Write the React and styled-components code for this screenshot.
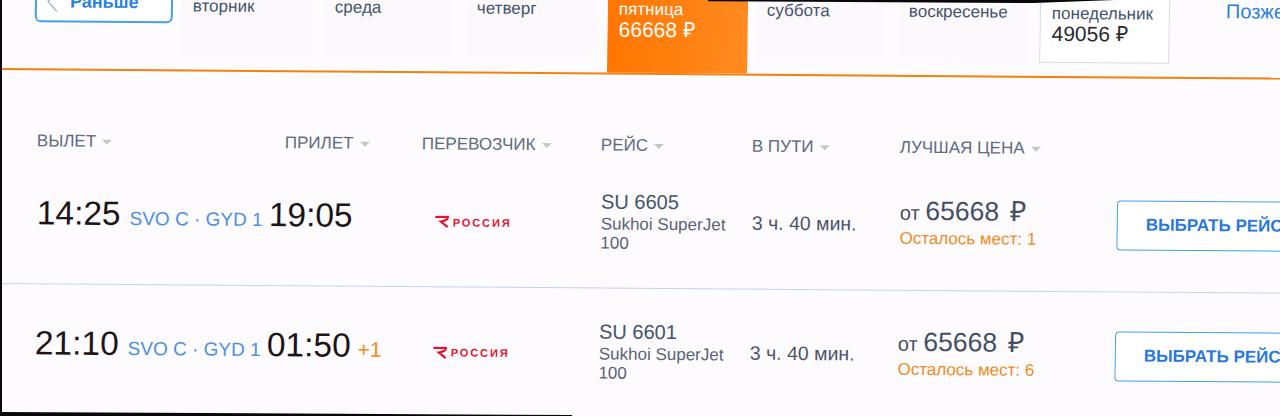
import styled, { createGlobalStyle } from "styled-components";

const days = [
  { name: "вторник" },
  { name: "среда" },
  { name: "четверг" },
  { name: "пятница", price: "66668 ₽", active: true },
  { name: "суббота" },
  { name: "воскресенье" },
  { name: "понедельник", price: "49056 ₽", lowest: true },
];

const columns = ["Вылет", "Прилет", "Перевозчик", "Рейс", "В пути", "Лучшая цена"];

const flights = [
  { dep: "14:25", arr: "19:05", number: "SU 6605", price: "65668", seats: 1 },
  { dep: "21:10", arr: "01:50", next: "+1", number: "SU 6601", price: "65668", seats: 6 },
];

const App = () => (
  <Viewport>
    <GlobalStyle />
    <Page>
      <DayStrip>
        <NavButton>
          <svg width="12" height="22" viewBox="0 0 12 22" fill="none">
            <path d="M11 1 2 11l9 10" stroke="#9fb4c8" strokeWidth="1.4" />
          </svg>
          Раньше
        </NavButton>
        {days.map((day) => (
          <DayCell key={day.name} $active={day.active} $lowest={day.lowest}>
            <DayName>{day.name}</DayName>
            {day.price && <DayPrice $lowest={day.lowest}>{day.price}</DayPrice>}
          </DayCell>
        ))}
        <LaterLink>Позже</LaterLink>
      </DayStrip>

      <HeaderRow>
        {columns.map((title) => (
          <HeaderCell key={title} $shift={title === "Прилет"}>
            {title}
          </HeaderCell>
        ))}
      </HeaderRow>

      {flights.map((flight) => (
        <FlightRow key={flight.number}>
          <TimeCell>
            <Time>{flight.dep}</Time>
            <Airports>SVO C · GYD 1</Airports>
          </TimeCell>
          <TimeCell>
            <Time>{flight.arr}</Time>
            {flight.next && <NextDay>{flight.next}</NextDay>}
          </TimeCell>
          <Carrier>
            <svg width="15" height="13" viewBox="0 0 15 13" fill="none">
              <path
                d="M0.5 1.5H13Q13.5 5 6 6.2L13 11.8"
                stroke="#e3132f"
                strokeWidth="2.2"
              />
            </svg>
            <CarrierName>россия</CarrierName>
          </Carrier>
          <FlightInfo>
            <FlightNumber>{flight.number}</FlightNumber>
            <Aircraft>Sukhoi SuperJet 100</Aircraft>
          </FlightInfo>
          <Duration>3 ч. 40 мин.</Duration>
          <PriceCell>
            <Price>
              от <strong>{flight.price}</strong>
              <Ruble>₽</Ruble>
            </Price>
            <Seats>Осталось мест: {flight.seats}</Seats>
          </PriceCell>
          <SelectButton>Выбрать рейс</SelectButton>
        </FlightRow>
      ))}
    </Page>
    <TopEdge />
    <LeftEdge />
    <BottomEdge />
  </Viewport>
);

export default App;

const GlobalStyle = createGlobalStyle`
  html, body {
    margin: 0;
    background: #fdfbfe;
  }
  * {
    box-sizing: border-box;
  }
`;

const Viewport = styled.div`
  position: relative;
  width: 1280px;
  height: 416px;
  overflow: hidden;
  background: #fdfbfe;
  font-family: "Liberation Sans", Arial, sans-serif;
`;

const Page = styled.div`
  display: flow-root;
  width: 1310px;
  transform: matrix(1, 0.0075, -0.015, 1, 0, 0);
  transform-origin: 0 0;
`;

const DayStrip = styled.div`
  display: flex;
  align-items: flex-start;
  gap: 12px;
  height: 90px;
  margin-top: -20px;
  padding-left: 35px;
  border-bottom: 2px solid #f57f0f;
`;

const NavButton = styled.button`
  display: flex;
  align-items: center;
  gap: 12px;
  width: 138px;
  height: 42px;
  margin-right: -3px;
  padding: 0 0 0 9px;
  border: 2px solid #45a0e6;
  border-radius: 6px;
  background: #fff;
  color: #2a82e0;
  font: bold 18px "Liberation Sans", Arial, sans-serif;
`;

const DayCell = styled.div`
  flex: 0 0 ${({ $active }) => ($active ? "140px" : "130px")};
  height: ${({ $active }) => ($active ? "88px" : "75px")};
  padding: 15px 11px 0;
  margin-right: ${({ $active }) => ($active ? "-4px" : "0")};
  border: ${({ $lowest }) => ($lowest ? "1px solid #d8dbe2" : "0")};
  background: ${({ $active, $lowest }) =>
    $active
      ? "linear-gradient(90deg, #ff7600, #ff8a20)"
      : $lowest
        ? "#fff"
        : "#fcf9fc"};
  color: ${({ $active }) => ($active ? "#fff" : "#44546c")};
`;

const DayName = styled.div`
  font-size: 17px;
  line-height: 20px;
`;

const DayPrice = styled.div`
  font-size: 21px;
  line-height: 20px;
  color: ${({ $lowest }) => ($lowest ? "#2a2a30" : "inherit")};
`;

const LaterLink = styled.a`
  margin-left: 44px;
  padding-top: 12px;
  color: #2a82e0;
  font-size: 20px;
  line-height: 20px;
`;

const HeaderRow = styled.div`
  display: grid;
  grid-template-columns: 232px 153px 179px 151px 148px 217px 1fr;
  height: 81px;
  padding: 61px 0 0 39px;
`;

const HeaderCell = styled.div`
  display: flex;
  align-items: center;
  gap: 6px;
  height: 20px;
  padding-left: ${({ $shift }) => ($shift ? "16px" : "0")};
  color: #5f6b7e;
  font-size: 17px;
  text-transform: uppercase;
  white-space: nowrap;

  &::after {
    content: "";
    border-top: 5px solid #c3c7ce;
    border-left: 5px solid transparent;
    border-right: 5px solid transparent;
  }
`;

const FlightRow = styled.div`
  display: grid;
  grid-template-columns: 232px 153px 179px 151px 148px 217px 1fr;
  align-items: center;
  height: 133px;
  padding-left: 40px;
  border-bottom: 1px solid #c6d2e8;

  &:last-child {
    height: 127px;
    border-bottom: 0;
  }
`;

const TimeCell = styled.div`
  display: flex;
  align-items: baseline;
  padding-bottom: 9px;
  white-space: nowrap;
`;

const Time = styled.span`
  color: #1c1416;
  font-size: 33.5px;
  line-height: 40px;
`;

const Airports = styled.span`
  margin-left: 9px;
  color: #4a90e2;
  font-size: 19px;
`;

const NextDay = styled.span`
  margin-left: 7px;
  color: #f08c1a;
  font-size: 21px;
`;

const Carrier = styled.div`
  display: flex;
  align-items: center;
  gap: 3px;
  padding: 3px 0 0 13px;
`;

const CarrierName = styled.span`
  color: #e3132f;
  font-size: 11px;
  font-weight: bold;
  letter-spacing: 1.9px;
  text-transform: uppercase;
`;

const FlightInfo = styled.div`
  padding-right: 6px;
`;

const FlightNumber = styled.div`
  margin-bottom: 3px;
  color: #46536a;
  font-size: 20px;
  line-height: 20px;
`;

const Aircraft = styled.div`
  color: #5a6374;
  font-size: 17px;
  line-height: 19px;
`;

const Duration = styled.div`
  color: #4c5568;
  font-size: 19.5px;
`;

const PriceCell = styled.div`
  padding-bottom: 2px;
  white-space: nowrap;
`;

const Price = styled.div`
  color: #454f63;
  font-size: 20px;
  line-height: 30px;

  strong {
    font-size: 26.5px;
    font-weight: normal;
  }
`;

const Ruble = styled.span`
  margin-left: 11px;
  font-size: 28px;
`;

const Seats = styled.div`
  color: #ef8c1f;
  font-size: 17px;
  line-height: 22px;
`;

const SelectButton = styled.button`
  width: 190px;
  height: 50px;
  padding: 0 0 0 8px;
  text-align: left;
  text-indent: 20px;
  border: 1.5px solid #45a0e6;
  border-radius: 4px;
  background: #fff;
  color: #2a78dc;
  font: bold 17px "Liberation Sans", Arial, sans-serif;
  text-transform: uppercase;
  white-space: nowrap;
`;

const TopEdge = styled.div`
  position: absolute;
  top: 0;
  left: 708px;
  width: 407px;
  height: 4px;
  background: #08080c;
  clip-path: polygon(0 0, 100% 0, 80% 75%, 0 30%);
`;

const LeftEdge = styled.div`
  position: absolute;
  top: 0;
  left: 0;
  width: 2px;
  height: 100%;
  background: #08080c;
`;

const BottomEdge = styled.div`
  position: absolute;
  left: 0;
  bottom: 0;
  width: 572px;
  height: 4px;
  background: #08080c;
  clip-path: polygon(0 0, 100% 75%, 100% 100%, 0 100%);
`;
